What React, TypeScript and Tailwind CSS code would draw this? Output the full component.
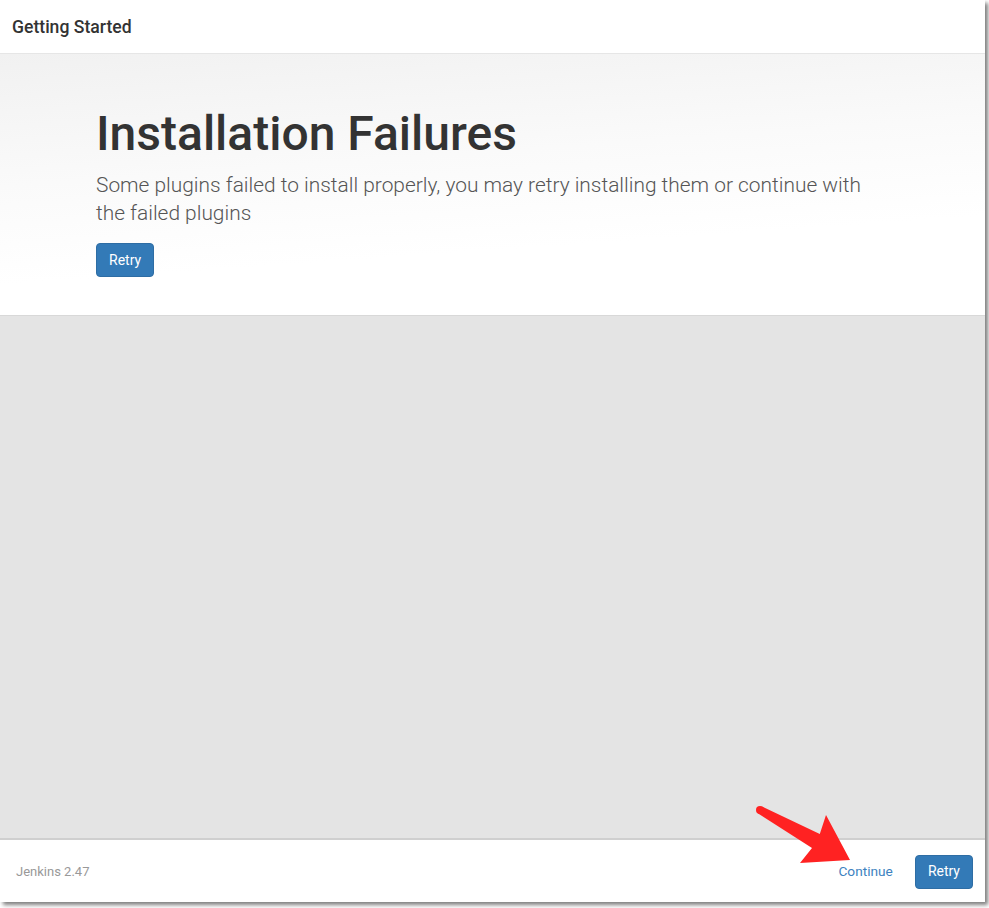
import React from 'react';

const RedArrow: React.FC = () => (
  <svg className="absolute left-0 top-0 pointer-events-none" width="989" height="908" viewBox="0 0 989 908">
    <circle cx="760" cy="810" r="4" fill="#ff2222" />
    <polygon
      points="761.9,806.5 819.8,834.1 826,815 850,860 800,863 812,848.1 758.1,813.5"
      fill="#ff2222"
      strokeLinejoin="round"
    />
  </svg>
);

const App: React.FC = () => {
  return (
    <div className="relative w-[989px] h-[908px] bg-white" style={{ fontFamily: 'Roboto, "Liberation Sans", sans-serif' }}>
      <div className="w-[985px] h-[902px] flex flex-col bg-white shadow-[3px_3px_4px_rgba(0,0,0,0.5)]">
        {/* Header */}
        <div className="h-[54px] shrink-0 flex items-center px-3 pt-[1px] border-b border-[#e6e6e6]">
          <h1 className="text-[17.6px] font-medium text-[#333]">Getting Started</h1>
        </div>

        {/* Jumbotron */}
        <div className="h-[262px] shrink-0 border-b border-[#d8d8d8] bg-[linear-gradient(176deg,#f1f1f1_0%,#fafafa_40%,#ffffff_70%)] pl-[96px] pr-12 pt-[52px]">
          <h2 className="text-[48px] leading-[56px] font-medium text-[#333]">Installation Failures</h2>
          <p className="mt-[9px] text-[20.9px] leading-[28px] font-light text-[#555] max-w-[790px]">
            Some plugins failed to install properly, you may retry installing them or continue with the failed plugins
          </p>
          <button className="mt-[16px] h-[34px] px-3 rounded-[4px] bg-[#337ab7] border border-[#2e6da4] text-white text-[14px]">
            Retry
          </button>
        </div>

        {/* Empty body */}
        <div className="flex-1 bg-[#e4e4e4]" />

        {/* Footer */}
        <div className="h-[64px] shrink-0 border-t-2 border-[#cfcfcf] flex items-center justify-between pl-4 pr-3 pt-[1px]">
          <span className="text-[13px] text-[#999]">Jenkins 2.47</span>
          <div className="flex items-center gap-[10px]">
            <button className="px-3 text-[13.7px] text-[#3d82c0]">Continue</button>
            <button className="h-[34px] px-3 rounded-[4px] bg-[#337ab7] border border-[#2e6da4] text-white text-[14px]">
              Retry
            </button>
          </div>
        </div>
      </div>
      <RedArrow />
    </div>
  );
};

export default App;
